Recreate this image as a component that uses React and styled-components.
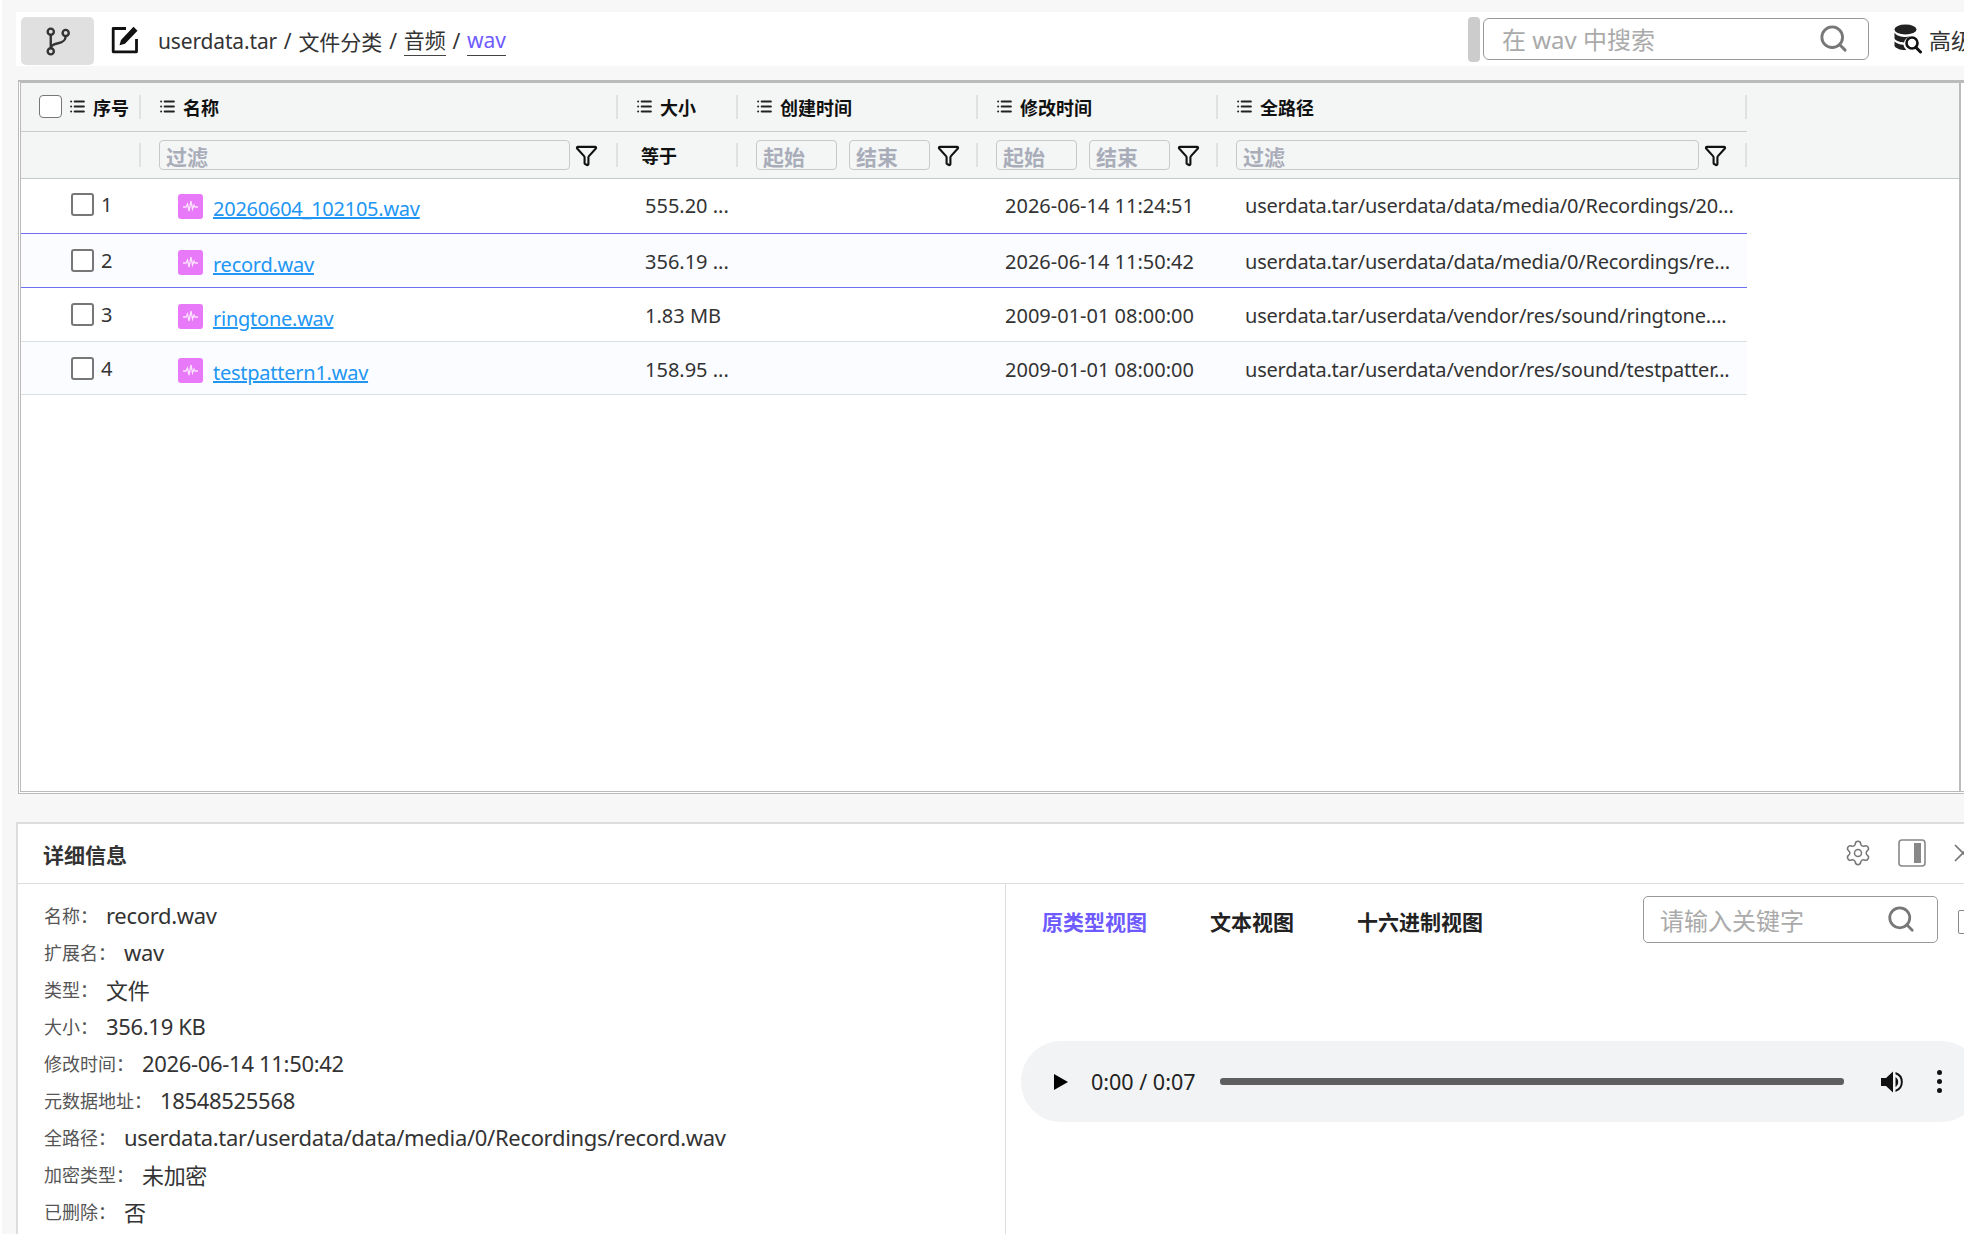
import styled, { createGlobalStyle } from "styled-components";
import { Filter, List, Search, Settings, X } from "lucide-react";

const FONT = `"Noto Sans", "Noto Sans CJK SC", sans-serif`;

const GlobalStyle = createGlobalStyle`
    html, body {
        margin: 0;
        padding: 0;
        background: #f7f7f7;
        overflow: hidden;
    }
    * {
        box-sizing: border-box;
    }
`;

const columns = "120px 477px 120px 240px 240px 529px";

const files = [
    { id: 1, name: "20260604_102105.wav", size: "555.20 ...", time: "2026-06-14 11:24:51", path: "userdata.tar/userdata/data/media/0/Recordings/20...", first: true, beforeActive: true },
    { id: 2, name: "record.wav", size: "356.19 ...", time: "2026-06-14 11:50:42", path: "userdata.tar/userdata/data/media/0/Recordings/re...", active: true },
    { id: 3, name: "ringtone.wav", size: "1.83 MB", time: "2009-01-01 08:00:00", path: "userdata.tar/userdata/vendor/res/sound/ringtone...." },
    { id: 4, name: "testpattern1.wav", size: "158.95 ...", time: "2009-01-01 08:00:00", path: "userdata.tar/userdata/vendor/res/sound/testpatter...", striped: true },
];

const details = [
    ["名称：", "record.wav"],
    ["扩展名：", "wav"],
    ["类型：", "文件"],
    ["大小：", "356.19 KB"],
    ["修改时间：", "2026-06-14 11:50:42"],
    ["元数据地址：", "18548525568"],
    ["全路径：", "userdata.tar/userdata/data/media/0/Recordings/record.wav"],
    ["加密类型：", "未加密"],
    ["已删除：", "否"],
];

function BranchIcon() {
    return (
        <svg width="24" height="29" viewBox="0 0 28 34" fill="none" stroke="#333" strokeWidth="2.8">
            <circle cx="5.5" cy="5.5" r="3.6" />
            <circle cx="5.5" cy="28.5" r="3.6" />
            <circle cx="23" cy="7" r="3.6" />
            <path d="M5.5 9v16M23 10.6c0 6-4 7.4-9 8.4-4 .8-8.500 2-8.500 6" />
        </svg>
    );
}

function EditIcon() {
    return (
        <svg width="28" height="28" viewBox="0 0 28 28" fill="none">
            <path d="M15 2.500H2.200v23.300h23.300V13" stroke="#111" strokeWidth="2.800" strokeLinejoin="round" />
            <path d="M22.500.8l4 4L14 17.800l-5.500 1.500L10 14z" fill="#111" />
        </svg>
    );
}

function WaveIcon() {
    return (
        <svg width="15" height="13" viewBox="0 0 15 13" fill="none" stroke="#fbe3ff" strokeWidth="1.300">
            <path d="M0 7h3l1.500-3L6 11l2-10 1.500 8L11 5l1 2h3" />
        </svg>
    );
}

function DbSearchIcon() {
    return (
        <svg width="28" height="30" viewBox="0 0 28 30">
            <ellipse cx="11.500" cy="5.500" rx="11" ry="5" fill="#222" />
            <path d="M.5 8.500c2 3.500 7 4.500 11 4.500 1.500 0 3-.2 4.500-.5-3 1-5.500 3-6 6-4-.2-8-1.500-9.500-4zM.5 17.500c2 2 5 3 9 3.300.3 2 1.300 3.800 3 5-1 .2-1.500.2-2 .2-4 0-8.500-1.500-10-4z" fill="#222" />
            <circle cx="18" cy="19" r="5.500" fill="#fff" stroke="#111" strokeWidth="2.600" />
            <path d="M22 23.500l4.500 4.500" stroke="#111" strokeWidth="3" strokeLinecap="round" />
        </svg>
    );
}

function PanelIcon() {
    return (
        <svg width="28" height="28" viewBox="0 0 28 28">
            <rect x="1" y="1" width="26" height="26" rx="3" fill="none" stroke="#888" strokeWidth="1.600" />
            <rect x="16" y="4" width="7" height="20" fill="#888" />
        </svg>
    );
}

function VolumeIcon() {
    return (
        <svg width="24" height="24" viewBox="0 0 24 24" fill="#111">
            <path d="M1 8h5l7-6.500v21L6 16H1z" />
            <path d="M15.500 7a6 6 0 0 1 0 10z" />
            <path d="M15.500 2a10.500 10.500 0 0 1 0 20v-2.300a8.200 8.200 0 0 0 0-15.400z" />
        </svg>
    );
}

function HeaderTitle({ label }) {
    return (
        <>
            <List size={17} strokeWidth={2.8} color="#222" />
            <span>{label}</span>
        </>
    );
}

export default function App() {
    return (
        <>
            <GlobalStyle />
            <Page>
                <Toolbar>
                    <BranchButton>
                        <BranchIcon />
                    </BranchButton>
                    <EditButton>
                        <EditIcon />
                    </EditButton>
                    <Breadcrumb>
                        <RootCrumb>userdata.tar</RootCrumb>
                        <span>/</span>
                        <span>文件分类</span>
                        <span>/</span>
                        <Crumb>音频</Crumb>
                        <span>/</span>
                        <Crumb $current>wav</Crumb>
                    </Breadcrumb>
                    <ToolbarRight>
                        <DragHandle />
                        <TopSearch>
                            <span>在 wav 中搜索</span>
                            <Search size={31} strokeWidth={2.2} color="#777" />
                        </TopSearch>
                        <Advanced>
                            <DbSearchIcon />
                            <span>高级搜索</span>
                        </Advanced>
                    </ToolbarRight>
                </Toolbar>

                <TableFrame>
                    <TableInner>
                        <HeaderRow>
                            <HeadCell $first>
                                <HeadCheck />
                                <HeaderTitle label="序号" />
                            </HeadCell>
                            <HeadCell><HeaderTitle label="名称" /></HeadCell>
                            <HeadCell><HeaderTitle label="大小" /></HeadCell>
                            <HeadCell><HeaderTitle label="创建时间" /></HeadCell>
                            <HeadCell><HeaderTitle label="修改时间" /></HeadCell>
                            <HeadCell><HeaderTitle label="全路径" /></HeadCell>
                        </HeaderRow>
                        <FilterBand>
                            <FilterRow>
                                <FilterCell />
                                <FilterCell>
                                    <FilterInput>过滤</FilterInput>
                                    <FunnelIcon />
                                </FilterCell>
                                <FilterCell><Equal>等于</Equal></FilterCell>
                                <FilterCell>
                                    <FilterInput $short>起始</FilterInput>
                                    <FilterInput $short>结束</FilterInput>
                                    <FunnelIcon $tight />
                                </FilterCell>
                                <FilterCell>
                                    <FilterInput $short>起始</FilterInput>
                                    <FilterInput $short>结束</FilterInput>
                                    <FunnelIcon $tight />
                                </FilterCell>
                                <FilterCell>
                                    <FilterInput>过滤</FilterInput>
                                    <FunnelIcon />
                                </FilterCell>
                            </FilterRow>
                        </FilterBand>
                        {files.map((file) => (
                            <Row
                                key={file.id}
                                $first={file.first}
                                $active={file.active}
                                $beforeActive={file.beforeActive}
                                $striped={file.striped}
                            >
                                <IndexCell>
                                    <RowCheck />
                                    <span>{file.id}</span>
                                </IndexCell>
                                <NameCell>
                                    <FileBadge><WaveIcon /></FileBadge>
                                    <FileLink>{file.name}</FileLink>
                                </NameCell>
                                <TextCell>{file.size}</TextCell>
                                <TextCell />
                                <TextCell>{file.time}</TextCell>
                                <TextCell $path>{file.path}</TextCell>
                            </Row>
                        ))}
                    </TableInner>
                </TableFrame>

                <DetailPanel>
                    <DetailHeader>
                        <DetailTitle>详细信息</DetailTitle>
                        <DetailActions>
                            <GearIcon size={28} strokeWidth={1.3} color="#777" />
                            <PanelIcon />
                            <X size={30} strokeWidth={1.4} color="#777" />
                        </DetailActions>
                    </DetailHeader>
                    <DetailBody>
                        <InfoColumn>
                            {details.map(([label, value]) => (
                                <InfoRow key={label}>
                                    <InfoLabel>{label}</InfoLabel>
                                    <span>{value}</span>
                                </InfoRow>
                            ))}
                        </InfoColumn>
                        <ViewColumn>
                            <ViewBar>
                                <ViewTab $active>原类型视图</ViewTab>
                                <ViewTab>文本视图</ViewTab>
                                <ViewTab>十六进制视图</ViewTab>
                                <KeywordSearch>
                                    <span>请输入关键字</span>
                                    <Search size={30} strokeWidth={2.2} color="#777" />
                                </KeywordSearch>
                                <CopyBox />
                            </ViewBar>
                            <Player>
                                <PlayTriangle />
                                <PlayerTime>0:00 / 0:07</PlayerTime>
                                <Track />
                                <VolumeIcon />
                                <Dots>
                                    <i /><i /><i />
                                </Dots>
                            </Player>
                        </ViewColumn>
                    </DetailBody>
                </DetailPanel>
            </Page>
        </>
    );
}

const Page = styled.div`
    width: 1964px;
    height: 1234px;
    padding-top: 12px;
    overflow: hidden;
    font-family: ${FONT};
    color: #333;
    border-left: 2px solid #fff;
`;

const Toolbar = styled.div`
    width: 1948px;
    height: 54px;
    margin-left: 14px;
    display: flex;
    align-items: center;
    background: #fff;
`;

const BranchButton = styled.div`
    width: 73px;
    height: 48px;
    margin: 5px 0 0 5px;
    align-self: flex-start;
    display: flex;
    align-items: center;
    justify-content: center;
    flex-shrink: 0;
    background: #e0e0e0;
    border-radius: 5px;
`;

const EditButton = styled.div`
    margin: 2px 0 0 17px;
    display: flex;
    flex-shrink: 0;
`;

const Breadcrumb = styled.div`
    margin-left: 19px;
    padding-top: 3px;
    flex: 1;
    display: flex;
    align-items: center;
    gap: 6.75px;
    font-size: 21px;
`;

const RootCrumb = styled.span`
    letter-spacing: -0.15px;
`;

const Crumb = styled.span`
    border-bottom: 1px solid #444;
    color: ${(p) => (p.$current ? "#6e5bff" : "#333")};
    line-height: 30px;
`;

const ToolbarRight = styled.div`
    width: 496px;
    height: 100%;
    flex-shrink: 0;
    display: flex;
    align-items: center;
    overflow: hidden;
`;

const DragHandle = styled.div`
    width: 12px;
    height: 45px;
    flex-shrink: 0;
    background: #ccc;
    border-radius: 4px;
`;

const TopSearch = styled.div`
    width: 386px;
    height: 42px;
    margin-left: 3px;
    padding: 0 19px 2px 18px;
    flex-shrink: 0;
    display: flex;
    align-items: center;
    justify-content: space-between;
    font-size: 24px;
    color: #aaa;
    border: 1px solid #999;
    border-radius: 6px;
`;

const Advanced = styled.div`
    margin-left: 25px;
    flex-shrink: 0;
    display: flex;
    align-items: center;
    gap: 7px;
    font-size: 22px;
    white-space: nowrap;
`;

const TableFrame = styled.div`
    width: 1946px;
    height: 714px;
    margin: 14px 0 0 16px;
    border-top: 3px solid #bbb;
    border-left: 3px double #bbb;
    border-bottom: 3px double #bbb;
    background: #fff;
`;

const TableInner = styled.div`
    width: 1940px;
    height: 100%;
    border-right: 2px solid #bbb;
`;

const HeaderRow = styled.div`
    width: 100%;
    height: 49px;
    padding-bottom: 2px;
    background: linear-gradient(#c9cbcf, #c9cbcf) 0 100% / 1726px 1px no-repeat #f4f6f6;
    display: grid;
    grid-template-columns: ${columns};
`;

const HeadCell = styled.div`
    height: 24px;
    align-self: center;
    padding-left: 18px;
    display: flex;
    align-items: center;
    gap: 7px;
    font-size: 18px;
    font-weight: 700;
    color: #111;
    white-space: nowrap;
    border-right: 2px solid #dfe1e2;
`;

const HeadCheck = styled.div`
    width: 23px;
    height: 23px;
    flex-shrink: 0;
    background: #fff;
    border: 1px solid #777;
    border-radius: 4px;
`;

const FilterBand = styled.div`
    height: 47px;
    background: #f4f6f6;
    border-bottom: 1px solid #c4c8cc;
`;

const FilterRow = styled.div`
    height: 100%;
    display: grid;
    grid-template-columns: ${columns};
    align-items: center;
`;

const FilterCell = styled.div`
    height: 24px;
    padding: 0 18px;
    display: flex;
    align-items: center;
    gap: 12px;
    border-right: 2px solid #dfe1e2;
`;

const FilterInput = styled.div`
    height: 30px;
    flex: ${(p) => (p.$short ? "none" : "1")};
    width: ${(p) => (p.$short ? "81px" : "auto")};
    margin-right: ${(p) => (p.$short ? "0" : "-7px")};
    padding: 1px 0 0 6px;
    display: flex;
    align-items: center;
    font-size: 21px;
    font-weight: 700;
    color: #a9adb9;
    border: 1px solid #c6c8ca;
    border-radius: 4px;
`;

const FunnelIcon = styled(Filter).attrs({ size: 23, strokeWidth: 2.2, color: "#111" })`
    margin-left: ${(p) => (p.$tight ? "-5px" : "auto")};
    flex-shrink: 0;
`;

const Equal = styled.span`
    margin-left: 5px;
    font-size: 18px;
    font-weight: 700;
    color: #111;
`;

const Row = styled.div`
    height: ${(p) => (p.$first ? "55px" : p.$striped ? "53px" : "54px")};
    padding-bottom: ${(p) => (p.$first ? "3px" : "0")};
    display: grid;
    grid-template-columns: ${columns};
    width: 1726px;
    align-items: center;
    font-size: 20px;
    background: ${(p) => (p.$active || p.$striped ? "#fbfcff" : "#fff")};
    border-bottom: 1px solid ${(p) => (p.$active || p.$beforeActive ? "#7070f0" : "#dcdfe3")};
`;

const IndexCell = styled.div`
    padding-left: 50px;
    display: flex;
    align-items: center;
    gap: 7px;
`;

const RowCheck = styled.div`
    width: 23px;
    height: 23px;
    border: 2px solid #777;
    border-radius: 3px;
    background: #fff;
`;

const NameCell = styled.div`
    padding: 8px 0 0 37px;
    display: flex;
    align-items: center;
    gap: 10px;
`;

const FileBadge = styled.div`
    width: 25px;
    height: 25px;
    margin-top: -4px;
    display: flex;
    align-items: center;
    justify-content: center;
    background: #e879f9;
    border-radius: 3px;
`;

const FileLink = styled.a`
    color: #2196f3;
    letter-spacing: -0.25px;
    text-decoration: underline;
    text-decoration-thickness: 2px;
`;

const TextCell = styled.div`
    padding: 2px 0 0 27px;
    white-space: nowrap;
    overflow: hidden;
    letter-spacing: ${(p) => (p.$path ? "-0.2px" : "0")};
`;

const DetailPanel = styled.div`
    width: 1950px;
    height: 412px;
    margin: 28px 0 0 14px;
    background: #fff;
    border-top: 2px solid #ddd;
    border-left: 2px solid #ddd;
`;

const DetailHeader = styled.div`
    height: 60px;
    padding: 0 0 0 25px;
    display: flex;
    align-items: center;
    justify-content: space-between;
    border-bottom: 1px solid #ddd;
`;

const DetailTitle = styled.div`
    font-size: 21px;
    font-weight: 700;
    color: #333;
`;

const DetailActions = styled.div`
    display: flex;
    align-items: center;
    gap: 22px;
    margin: 0 -12px 2px 0;
`;

const GearIcon = styled(Settings)`
    margin-right: 4px;
`;

const DetailBody = styled.div`
    display: flex;
`;

const InfoColumn = styled.div`
    width: 988px;
    height: 350px;
    padding: 12px 0 0 26px;
    flex-shrink: 0;
    border-right: 1px solid #ddd;
`;

const InfoRow = styled.div`
    height: 37px;
    display: flex;
    align-items: center;
    font-size: 22px;
    letter-spacing: -0.32px;
    white-space: nowrap;
`;

const InfoLabel = styled.span`
    margin-right: 8px;
    font-size: 18px;
    letter-spacing: 0;
    color: #555;
`;

const ViewColumn = styled.div`
    flex: 1;
    min-width: 0;
`;

const ViewBar = styled.div`
    height: 94px;
    padding: 0 0 24px 36px;
    display: flex;
    align-items: center;
    gap: 63px;
`;

const ViewTab = styled.div`
    font-size: 21px;
    font-weight: 700;
    white-space: nowrap;
    padding-top: 4px;
    color: ${(p) => (p.$active ? "#6e5bff" : "#222")};
`;

const KeywordSearch = styled.div`
    width: 295px;
    height: 47px;
    margin-left: 97px;
    padding: 0 21px 0 16px;
    flex-shrink: 0;
    display: flex;
    align-items: center;
    justify-content: space-between;
    font-size: 24px;
    color: #aaa;
    border: 1px solid #999;
    border-radius: 5px;
`;

const CopyBox = styled.div`
    width: 24px;
    height: 24px;
    margin: 6px 0 0 -43px;
    flex-shrink: 0;
    border: 1px solid #888;
    border-radius: 2px;
`;

const Player = styled.div`
    width: 960px;
    height: 81px;
    margin: 63px 0 0 15px;
    padding: 0 0 0 33px;
    display: flex;
    align-items: center;
    background: #f1f3f4;
    border-radius: 40px;
`;

const PlayTriangle = styled.div`
    width: 0;
    height: 0;
    border-style: solid;
    border-width: 8.5px 0 8.5px 14px;
    border-color: transparent transparent transparent #000;
    flex-shrink: 0;
`;

const PlayerTime = styled.div`
    margin-left: 23px;
    width: 129px;
    flex-shrink: 0;
    font-size: 21.5px;
    color: #222;
`;

const Track = styled.div`
    width: 624px;
    height: 7px;
    margin-right: 36px;
    flex-shrink: 0;
    background: #5e5e5e;
    border-radius: 3px;
`;

const Dots = styled.div`
    margin-left: 33px;
    display: flex;
    flex-direction: column;
    gap: 4px;
    i {
        display: block;
        width: 5px;
        height: 5px;
        background: #111;
        border-radius: 50%;
    }
`;
